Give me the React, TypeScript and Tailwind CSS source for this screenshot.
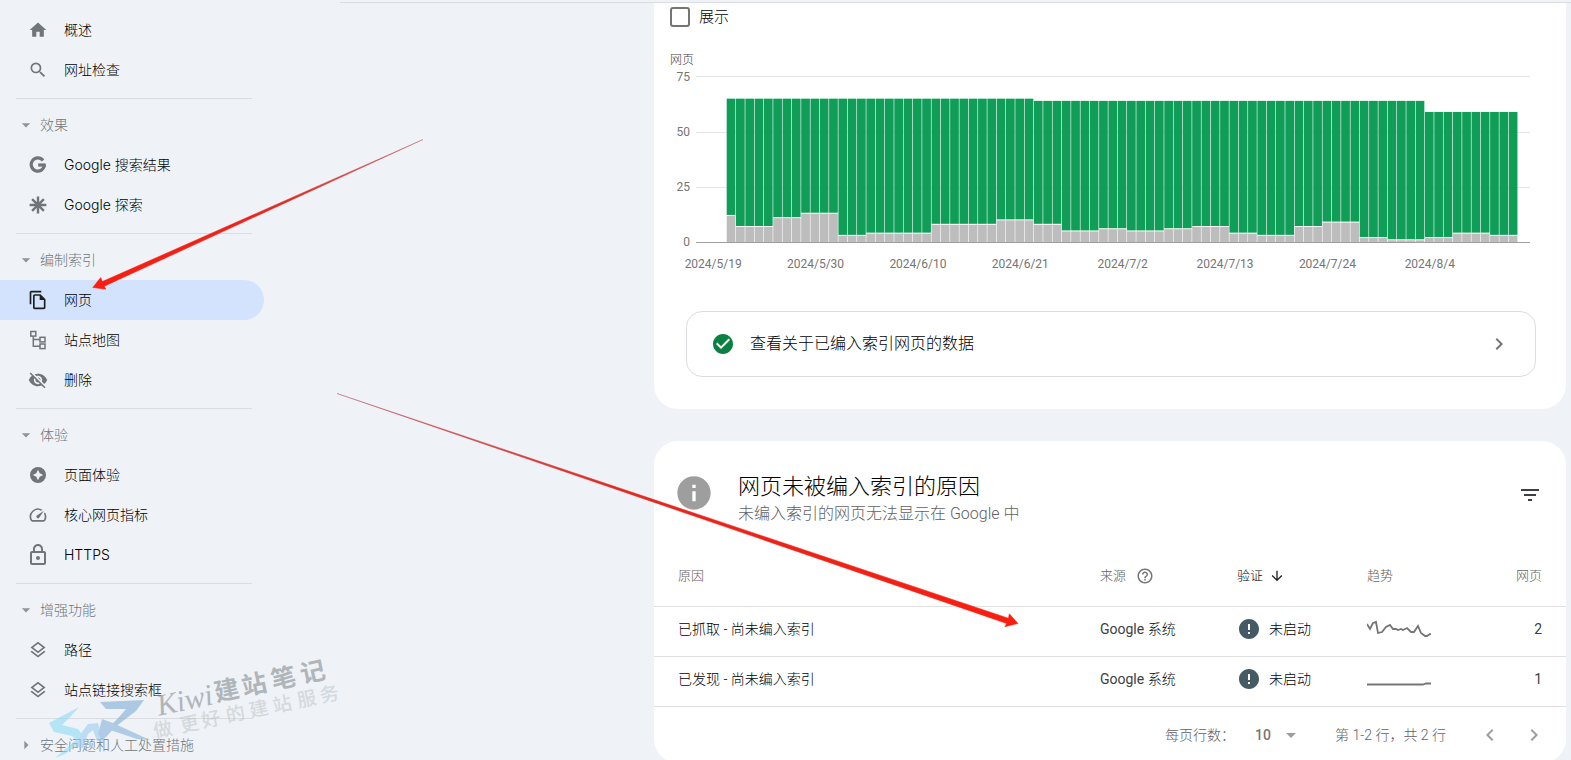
import type { ReactNode } from 'react'
import {
  MdArrowDownward, MdArrowDropDown, MdArrowRight, MdCheckCircle, MdChevronLeft, MdChevronRight,
  MdError, MdFilterList, MdHelpOutline, MdHome, MdInfo, MdLockOutline, MdOutlineFileCopy,
  MdOutlineLayers, MdOutlineSpeed, MdSearch, MdVisibilityOff,
} from 'react-icons/md'

const GoogleIcon = () => (
  <svg width="18" height="18" viewBox="0 0 18 18" fill="none" stroke="currentColor" strokeWidth="3.2">
    <path d="M14 4.4A6.6 6.6 0 1 0 15.4 9" />
    <path d="M9.2 9h7.5" />
  </svg>
)

const DiscoverIcon = () => (
  <svg width="18" height="18" viewBox="0 0 18 18" stroke="currentColor" strokeWidth="2.4">
    <path d="M9 .6v16.8M.6 9h16.8M3.1 3.1l11.8 11.8M14.9 3.1L3.1 14.9" />
  </svg>
)

const SitemapIcon = () => (
  <svg width="18" height="20" viewBox="0 0 18 20" fill="none" stroke="currentColor" strokeWidth="1.5">
    <rect x="1.8" y="1.5" width="5" height="4.6" />
    <rect x="11" y="7.3" width="5" height="4.6" />
    <rect x="11" y="14" width="5" height="4.6" />
    <path d="M4.3 6.1v10.2H11M4.3 9.6H11" />
  </svg>
)

const PageExperienceIcon = () => (
  <svg width="18" height="18" viewBox="0 0 18 18" fill="currentColor" fillRule="evenodd">
    <path d="M9 1a8 8 0 1 0 0 16A8 8 0 0 0 9 1zm0 2.8l1.7 3.5L14.2 9l-3.5 1.7L9 14.2l-1.7-3.5L3.8 9l3.5-1.7z" />
  </svg>
)

interface NavItem {
  label: string
  icon: ReactNode
  active?: boolean
}

interface NavGroup {
  title?: string
  closed?: boolean
  items: NavItem[]
}

const NAV: NavGroup[] = [
  {
    items: [
      { label: '概述', icon: <MdHome size={20} /> },
      { label: '网址检查', icon: <MdSearch size={20} /> },
    ],
  },
  {
    title: '效果',
    items: [
      { label: 'Google 搜索结果', icon: <GoogleIcon /> },
      { label: 'Google 探索', icon: <DiscoverIcon /> },
    ],
  },
  {
    title: '编制索引',
    items: [
      { label: '网页', icon: <MdOutlineFileCopy size={20} />, active: true },
      { label: '站点地图', icon: <SitemapIcon /> },
      { label: '删除', icon: <MdVisibilityOff size={20} /> },
    ],
  },
  {
    title: '体验',
    items: [
      { label: '页面体验', icon: <PageExperienceIcon /> },
      { label: '核心网页指标', icon: <MdOutlineSpeed size={20} /> },
      { label: 'HTTPS', icon: <MdLockOutline size={24} /> },
    ],
  },
  {
    title: '增强功能',
    items: [
      { label: '路径', icon: <MdOutlineLayers size={20} /> },
      { label: '站点链接搜索框', icon: <MdOutlineLayers size={20} /> },
    ],
  },
  { title: '安全问题和人工处置措施', closed: true, items: [] },
]

// [days, pages] runs, oldest first
const NOT_INDEXED = [
  [1, 12], [4, 7], [3, 11], [4, 13], [3, 3], [7, 4], [7, 8], [4, 10], [3, 8], [4, 5], [3, 6], [4, 5],
  [3, 6], [4, 7], [3, 4], [4, 3], [3, 7], [4, 9], [3, 2], [4, 1], [3, 2], [4, 4], [3, 3],
]
const TOTAL = [[33, 65], [42, 64], [10, 59]]

const expand = (runs: number[][]) => runs.flatMap(([days, value]) => Array<number>(days).fill(value))

const DATES = ['2024/5/19', '2024/5/30', '2024/6/10', '2024/6/21', '2024/7/2', '2024/7/13', '2024/7/24', '2024/8/4']

const ROWS = [
  {
    reason: '已抓取 - 尚未编入索引',
    pages: 2,
    trend: 'M0 4l3 5 3-6 3-1 2 11 4-1 4-5 4-2 3 4 3 0 2 1 3-1 2 1 4-2 4 4 3 0 4-6 3 7 4 3 2 0 3-2 3 1',
  },
  { reason: '已发现 - 尚未编入索引', pages: 1, trend: 'M0 14.5h56l3-1h5' },
]

function Sidebar() {
  return (
    <nav className="w-[264px] shrink-0 pt-[10px] font-[Inter,'Noto_Sans_CJK_SC',sans-serif] text-sm">
      {NAV.map((group, i) => (
        <div key={i}>
          {i > 0 && <hr className="mt-2 mb-[6px] ml-4 mr-3 border-[#dadce0]" />}
          {group.title && (
            <button className="flex h-10 w-full items-center pl-4 text-[#70757a]">
              <span className="w-6 text-[#8f9499]">
                {group.closed ? <MdArrowRight size={20} /> : <MdArrowDropDown size={20} />}
              </span>
              <span className="whitespace-nowrap font-light">{group.title}</span>
            </button>
          )}
          {group.items.map(item => (
            <a
              key={item.label}
              href="#"
              className={`flex h-10 items-center gap-[14px] rounded-r-full pl-[26px] ${item.active ? 'bg-[#d3e3fd]' : ''}`}
            >
              <span className={`flex w-6 justify-center ${item.active ? 'text-[#1f1f1f]' : 'text-[#70757a]'}`}>{item.icon}</span>
              <span className="font-light text-black">{item.label}</span>
            </a>
          ))}
        </div>
      ))}
    </nav>
  )
}

function IndexChart() {
  const total = expand(TOTAL)
  const notIndexed = expand(NOT_INDEXED)
  const step = 9.31
  const unit = 2.213
  const base = 166.5
  return (
    <div>
      <div className="flex pl-4 pr-9 text-xs text-[#757575]">
        <div className="flex w-[26px] shrink-0 flex-col gap-[39px] pr-[6px] text-right leading-4">
          <span>75</span>
          <span>50</span>
          <span>25</span>
          <span>0</span>
        </div>
        <svg className="mt-[7px] h-[168px] min-w-0 flex-1" viewBox="0 0 834 168" preserveAspectRatio="none">
          {[0.5, 56.5, 111.5].map(y => <path key={y} d={`M0 ${y}h834`} stroke="#e6e6e6" />)}
          {total.map((value, i) => {
            const x = 30.7 + i * step
            const top = base - value * unit
            const split = base - notIndexed[i] * unit
            return (
              <g key={i}>
                <rect x={x} y={top} width={step - 0.6} height={split - top - 1} fill="#109d58" />
                <rect x={x} y={split} width={step - 0.6} height={base - split} fill="#bdbdbd" />
              </g>
            )
          })}
          <path d={`M0 ${base}h834`} stroke="#9e9e9e" />
        </svg>
      </div>
      <div className="mt-[6px] mr-[85px] ml-2 flex text-xs leading-4 text-[#757575]">
        {DATES.map(date => <span key={date} className="flex-1 text-center">{date}</span>)}
      </div>
    </div>
  )
}

function ReasonTable() {
  return (
    <table className="w-full table-fixed text-left text-sm">
      <thead>
        <tr className="h-[59px] border-b border-[#e0e0e0] text-[13px] text-[#616161]">
          <th className="pl-6 font-light">原因</th>
          <th className="w-[137px] font-light">
            <span className="flex items-center gap-[10px]">来源 <MdHelpOutline size={18} className="text-[#757575]" /></span>
          </th>
          <th className="w-[130px] font-light text-black">
            <span className="flex items-center gap-[6px]">验证 <MdArrowDownward size={16} className="text-[#212121]" /></span>
          </th>
          <th className="w-[100px] font-light">趋势</th>
          <th className="w-[99px] pr-6 text-right font-light">网页</th>
        </tr>
      </thead>
      <tbody className="text-[#3c4043]">
        {ROWS.map(row => (
          <tr key={row.reason} className="h-[50px] border-b border-[#e0e0e0]">
            <td className="pb-1 pl-6 font-light text-black">{row.reason}</td>
            <td className="pb-1">Google <span className="font-light text-black">系统</span></td>
            <td className="pb-1">
              <span className="flex items-center gap-2 font-light text-black">
                <MdError size={24} className="text-[#455a64]" />
                未启动
              </span>
            </td>
            <td className="pb-1">
              <svg width="64" height="18" viewBox="0 0 64 18" fill="none" stroke="#757575" strokeWidth="1.8">
                <path d={row.trend} />
              </svg>
            </td>
            <td className="pr-6 pb-1 text-right">{row.pages}</td>
          </tr>
        ))}
      </tbody>
    </table>
  )
}

function Watermark() {
  return (
    <svg className="pointer-events-none absolute top-[650px] left-10" width="320" height="110" viewBox="0 0 320 110">
      <g opacity="0.6">
        <path d="M39 57L9 73L14 82L32 86L36 90L15 108L25 104L45 88L38 79L22 75L31 66z" fill="#90dbf8" />
        <path d="M35 97L42 82L48 74L58 73L63 92L57 91L53 80L48 84L43 98z" fill="#9ccdf0" />
        <path d="M60 52L104 50L96 61L75 77L66 87L61 86L80 66L86 59L66 59z" fill="#82acd6" />
        <path d="M58 84L62 69L73 73L110 90L97 89L70 80L63 91z" fill="#88b2da" />
      </g>
      <g transform="rotate(-12 118 66)" fill="#8f959b" opacity="0.65">
        <text x="119" y="66" fontSize="30" fontStyle="italic" fontFamily="Liberation Serif">Kiwi</text>
        <text x="178 206 236 266" y="64" fontSize="25" fontWeight="700" fontFamily="Noto Sans CJK SC">建站笔记</text>
      </g>
      <g transform="rotate(-12 115 88)" fill="#aeb4ba" opacity="0.4">
        <text x="115 142 164 189 213 237 262 285" y="88" fontSize="19" fontWeight="500" fontFamily="Noto Sans CJK SC">做更好的建站服务</text>
      </g>
    </svg>
  )
}

function Pointers() {
  return (
    <svg className="pointer-events-none absolute top-0 left-0" width="1571" height="760" viewBox="0 0 1571 760">
      <defs>
        <linearGradient id="fadeLeft" gradientUnits="userSpaceOnUse" x1="423" y1="138" x2="93" y2="288">
          <stop offset="0" stopColor="#b5444a" stopOpacity="0.7" />
          <stop offset="0.4" stopColor="#e0281f" />
          <stop offset="1" stopColor="#fb1d10" />
        </linearGradient>
        <linearGradient id="fadeRight" gradientUnits="userSpaceOnUse" x1="337" y1="393" x2="1018" y2="624">
          <stop offset="0" stopColor="#b5444a" stopOpacity="0.7" />
          <stop offset="0.4" stopColor="#e0281f" />
          <stop offset="1" stopColor="#fb1d10" />
        </linearGradient>
      </defs>
      <path
        d="M92.7 287.5L100.7 277.5L102.3 281.6L423 139.5L104.3 286.2L105.8 289.2z"
        fill="url(#fadeLeft)"
        stroke="url(#fadeLeft)"
        strokeWidth="0.5"
      />
      <path
        d="M1018 623.4L1009.3 613.8L1008.4 618.2L337 393.5L1006.6 623.4L1004.8 626.8z"
        fill="url(#fadeRight)"
        stroke="url(#fadeRight)"
        strokeWidth="0.5"
      />
    </svg>
  )
}

export default function App() {
  return (
    <div className="relative flex h-screen overflow-hidden bg-[#eff3f7] font-[Roboto,'Noto_Sans_CJK_SC',sans-serif]">
      <Sidebar />
      <div className="flex min-w-0 flex-1 flex-col pl-[76px]">
        <div className="h-[3px] shrink-0 border-b border-[#dadce0]" />
        <main className="flex flex-col gap-8 pr-[5px] pl-[314px]">
          <section className="rounded-b-3xl bg-white pb-8">
            <label className="flex items-center gap-[9px] pt-1 pl-4 text-[15px] leading-5 font-light text-black">
              <input type="checkbox" className="size-5 appearance-none rounded-[3px] border-2 border-[#757575]" />
              展示
            </label>
            <p className="mt-[25px] pl-4 text-xs leading-[17px] font-light text-[#424242]">网页</p>
            <IndexChart />
            <div className="mt-[39px] pr-[30px] pl-8">
              <button className="flex h-[66px] w-full items-center rounded-2xl border border-[#dadce0] px-6">
                <MdCheckCircle size={24} className="text-[#0b8043]" />
                <span className="ml-[15px] flex-1 text-left font-light text-black">查看关于已编入索引网页的数据</span>
                <MdChevronRight size={24} className="text-[#757575]" />
              </button>
            </div>
          </section>

          <section className="rounded-3xl bg-white">
            <header className="flex items-start pt-8 pr-6 pl-5">
              <MdInfo size={40} className="text-[#9e9e9e]" />
              <div className="ml-6 flex-1">
                <h2 className="text-[22px] leading-7 font-light text-black">网页未被编入索引的原因</h2>
                <p className="leading-[26px] font-light text-[#616161]">未编入索引的网页无法显示在 Google 中</p>
              </div>
              <button aria-label="过滤" className="mt-[10px]"><MdFilterList size={24} className="text-[#3c4043]" /></button>
            </header>
            <div className="mt-5">
              <ReasonTable />
            </div>
            <footer className="flex h-14 items-center justify-end pr-5 text-sm text-[#616161]">
              <label htmlFor="rows" className="font-light">每页行数：</label>
              <span className="relative ml-5 flex items-center">
                <select id="rows" className="w-12 appearance-none font-medium text-[#757575]"><option>10</option></select>
                <MdArrowDropDown size={24} className="pointer-events-none absolute left-6 text-[#9e9e9e]" />
              </span>
              <span className="ml-8 font-light">第 1-2 行，共 2 行</span>
              <button aria-label="上一页" className="ml-8"><MdChevronLeft size={24} className="text-[#9e9e9e]" /></button>
              <button aria-label="下一页" className="ml-5"><MdChevronRight size={24} className="text-[#9e9e9e]" /></button>
            </footer>
          </section>
        </main>
      </div>
      <Watermark />
      <Pointers />
    </div>
  )
}
